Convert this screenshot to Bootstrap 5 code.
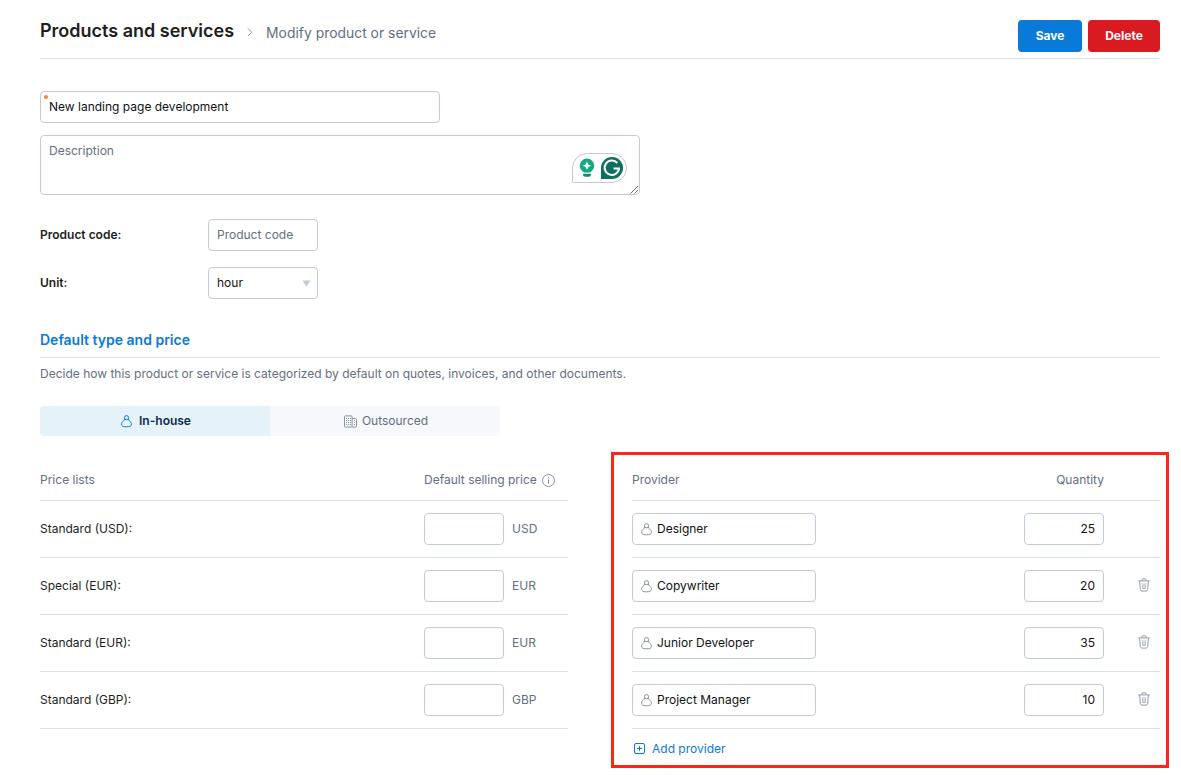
<!DOCTYPE html>
<html lang="en">
<head>
<meta charset="utf-8">
<meta name="viewport" content="width=device-width, initial-scale=1">
<title>Products and services</title>
<link href="https://cdn.jsdelivr.net/npm/bootstrap@5.3.0/dist/css/bootstrap.min.css" rel="stylesheet">
<style>
  body { min-height: 775px; font-family: Inter, "Liberation Sans", sans-serif; font-size: 12px; line-height: 20px; color: #1c1e21; background: #fff; }
  svg { display: block; flex: none; }
  .page { width: 1120px; margin-left: 40px; }
  .line { border-bottom: 1px solid #dae0ea; }
  .soft { color: #646e82; }
  .topbar { height: 59px; padding-top: 20px; margin-bottom: 32px; }
  .topbar h1 { font-size: 18px; line-height: 22px; font-weight: 600; }
  .crumb { font-size: 13.9px; line-height: 22px; padding-top: 2px; }
  .chevron { margin: 7px 13px 0 13px; }
  .btn { height: 32px; border: 0; border-radius: 4px; font-size: 12px; font-weight: 700; padding: 0; color: #fff; }
  .btn-save { width: 64px; background: #0a7ad8; }
  .btn-delete { width: 72px; background: #d91a20; }
  .form-control, .form-select { height: 32px; font-size: 12px; line-height: 20px; color: #101214; border: 1px solid #c3cadb; border-radius: 4px; padding: 5px 8px; background-color: #fff; }
  input.form-control { padding-top: 4px; padding-bottom: 6px; }
  .form-control::placeholder { color: #646e82; }
  .name-field { width: 400px; }
  .dot { left: 4px; top: 4px; width: 4px; height: 4px; background: #f5823a; border-radius: 50%; }
  .desc { width: 600px; height: 60px; margin-top: 12px; }
  .desc textarea { height: 60px; resize: none; }
  .writer { left: 532px; top: 18px; }
  .grip { right: 1px; bottom: 1px; }
  .lbl { width: 168px; font-weight: 600; }
  .w110 { width: 110px; }
  .form-select.w110 { background-image: none; }
  .caret { right: 7px; top: 13px; }
  .section { font-size: 14px; font-weight: 600; color: #0a7ad8; height: 28px; line-height: 20px; margin-top: 31px; }
  .types { width: 460px; height: 30px; margin-top: 22px; border-radius: 4px; overflow: hidden; background: #f6f8fc; }
  .types > div { width: 230px; padding-left: 2px; }
  .types .on { background: #e6f2f9; color: #0d2a4d; font-weight: 600; }
  .blue { color: #0a7ad8; }
  .grey { color: #8790a3; }
  .lists { gap: 64px; margin-top: 34px; }
  .lists > div { width: 528px; }
  .thead-row { height: 31px; }
  .info { margin: 4px 0 0 5px; }
  .item { height: 57px; }
  .c1 { width: 384px; }
  .w80 { width: 80px; }
  .item .prov { width: 184px; padding-left: 24px; }
  .prov-icon { left: 8.500px; top: 10px; }
  .qty-head { margin-right: 56px; }
  .qty { width: 80px; text-align: right; }
  .del { width: 56px; padding: 0 0 2px 34px; }
  .add { color: #0a7ad8; margin-top: 10px; padding-left: 2px; gap: 7px; }
  .add svg { margin-bottom: 1px; }
  .callout { left: -21px; right: -9px; top: -18px; height: 316px; border: 3px solid #fb2518; pointer-events: none; }
</style>
</head>
<body>
<svg width="0" height="0" class="position-absolute" aria-hidden="true">
  <defs>
    <symbol id="person" viewBox="0 0 12 13"><g fill="none" stroke="currentColor" stroke-width="1"><circle cx="5.5" cy="2.7" r="2.1"/><path d="M3.600 3.900C3.300 5 3.300 5.300 2.600 5.800 1.300 6.700.6 7.900.6 9.100c0 2 1.500 2.700 4.900 2.700s4.900-.7 4.900-2.700c0-1.200-.7-2.400-2-3.300C7.700 5.300 7.700 5 7.400 3.900"/></g></symbol>
    <symbol id="trash" viewBox="0 0 12 14"><g fill="none" stroke="currentColor" stroke-width=".9"><path d="M.2 2.900h11.600M4 2.700V1.600q0-.8.8-.8h2.400q.8 0 .8.800v1.100M1.500 3.100l.9 8.500q.2 1.500 1.500 1.500h4.200q1.300 0 1.500-1.500l.9-8.500"/><path d="M4.200 5.200l.5 5.300h2.600l.5-5.300M6 5.200v5.300" stroke-width=".6"/></g></symbol>
  </defs>
</svg>
<main class="page">
  <header class="topbar line d-flex justify-content-between">
    <div class="d-flex">
      <h1 class="mb-0">Products and services</h1>
      <svg class="chevron" width="6" height="10" viewBox="0 0 6 10"><path d="M1 1.500l3.700 3.700L1 8.900" fill="none" stroke="#8992a5"/></svg>
      <span class="crumb soft">Modify product or service</span>
    </div>
    <div class="d-flex" style="gap:6px">
      <button class="btn btn-save">Save</button>
      <button class="btn btn-delete">Delete</button>
    </div>
  </header>

  <div class="name-field position-relative">
    <input class="form-control" value="New landing page development">
    <span class="dot position-absolute"></span>
  </div>
  <div class="desc position-relative">
    <textarea class="form-control" placeholder="Description"></textarea>
    <svg class="writer position-absolute" width="56" height="31" viewBox="0 0 56 31">
      <path d="M.5 29.500V15A14.500 14.500 0 0 1 15 .5h25a14.500 14.500 0 0 1 0 29z" fill="#fff" stroke="#c3c8da"/>
      <path d="M15 5.500a7.300 7.300 0 0 1 7.300 7.300c0 3-1.800 4.400-3.300 5.900q-.7.800-1.500.800h-5q-.8 0-1.500-.8c-1.500-1.500-3.300-2.900-3.300-5.900A7.300 7.300 0 0 1 15 5.500z" fill="#15a884"/>
      <path d="M15 8.500l1.300 2.900 2.900 1.300-2.900 1.300L15 16.900 13.700 14l-2.900-1.300 2.900-1.300z" fill="#fff"/>
      <path d="M11 20.800h8v.7q0 2.300-2.300 2.300h-3.400q-2.300 0-2.300-2.300z" fill="#0d8f74"/>
      <path d="M29 26V15a11 11 0 1 1 11 11z" fill="#0d705e"/>
      <path d="M45.300 10A7.200 7.200 0 1 0 47 15.500h-5.500" fill="none" stroke="#fff" stroke-width="2"/>
    </svg>
    <svg class="grip position-absolute" width="9" height="9" viewBox="0 0 9 9"><path d="M.5 8.500l7.500-7.500M4.500 8.500l3.500-3.500" stroke="#666" stroke-width="1"/></svg>
  </div>

  <div class="d-flex align-items-center mt-4">
    <label class="lbl" for="code">Product code:</label>
    <input id="code" class="form-control w110" placeholder="Product code">
  </div>
  <div class="d-flex align-items-center mt-3">
    <span class="lbl">Unit:</span>
    <div class="position-relative w110">
      <div class="form-select w110">hour</div>
      <svg class="caret position-absolute" width="9" height="7" viewBox="0 0 9 7"><path d="M1 .5h7q.6 0 .2.600L5.100 5.700q-.6.800-1.200 0L.8 1.100Q.4.500 1 .5z" fill="#c3cadb"/></svg>
    </div>
  </div>

  <h2 class="section line mb-0">Default type and price</h2>
  <p class="soft mb-0" style="margin-top:6px">Decide how this product or service is categorized by default on quotes, invoices, and other documents.</p>
  <div class="types d-flex">
    <div class="on d-flex align-items-center justify-content-center" style="gap:6px"><svg class="blue" width="12" height="13"><use href="#person"/></svg>In-house</div>
    <div class="soft d-flex align-items-center justify-content-center" style="gap:5px">
      <svg width="13" height="13" viewBox="0 0 13 13"><g fill="none" stroke="#7d879b" stroke-width=".9"><rect x=".5" y=".9" width="7.600" height="11.200" rx="1"/><path d="M8.100 3.500h3.400q1 0 1 1v6.600q0 1-1 1H8.100"/><path d="M2 3.500h5M2 5.500h5M2 7.500h5M2 9.500h5" stroke-dasharray="1 1"/><path d="M10 5.500h1M10 7.500h1M10 9.500h1"/></g></svg>Outsourced</div>
  </div>

  <div class="lists d-flex">
    <div>
      <div class="thead-row line soft d-flex"><span class="c1">Price lists</span><span>Default selling price</span>
        <svg class="info" width="13" height="13" viewBox="0 0 13 13"><circle cx="6.500" cy="6.500" r="6" fill="none" stroke="#7d879b" stroke-width=".9"/><path d="M6.500 5.400v4.300M6.500 3v1.200" stroke="#7d879b"/></svg></div>
      <div class="item line d-flex align-items-center"><span class="c1">Standard (USD):</span><input class="form-control w80 me-2"><span class="soft">USD</span></div>
      <div class="item line d-flex align-items-center"><span class="c1">Special (EUR):</span><input class="form-control w80 me-2"><span class="soft">EUR</span></div>
      <div class="item line d-flex align-items-center"><span class="c1">Standard (EUR):</span><input class="form-control w80 me-2"><span class="soft">EUR</span></div>
      <div class="item line d-flex align-items-center"><span class="c1">Standard (GBP):</span><input class="form-control w80 me-2"><span class="soft">GBP</span></div>
    </div>
    <div class="position-relative">
      <div class="thead-row line soft d-flex justify-content-between"><span>Provider</span><span class="qty-head">Quantity</span></div>
      <div class="item line d-flex align-items-center"><div class="position-relative me-auto"><input class="form-control prov" value="Designer"><svg class="prov-icon grey position-absolute" width="12" height="13"><use href="#person"/></svg></div><input class="form-control qty" value="25"><span class="del"></span></div>
      <div class="item line d-flex align-items-center"><div class="position-relative me-auto"><input class="form-control prov" value="Copywriter"><svg class="prov-icon grey position-absolute" width="12" height="13"><use href="#person"/></svg></div><input class="form-control qty" value="20"><span class="del grey"><svg width="12" height="14"><use href="#trash"/></svg></span></div>
      <div class="item line d-flex align-items-center"><div class="position-relative me-auto"><input class="form-control prov" value="Junior Developer"><svg class="prov-icon grey position-absolute" width="12" height="13"><use href="#person"/></svg></div><input class="form-control qty" value="35"><span class="del grey"><svg width="12" height="14"><use href="#trash"/></svg></span></div>
      <div class="item line d-flex align-items-center"><div class="position-relative me-auto"><input class="form-control prov" value="Project Manager"><svg class="prov-icon grey position-absolute" width="12" height="13"><use href="#person"/></svg></div><input class="form-control qty" value="10"><span class="del grey"><svg width="12" height="14"><use href="#trash"/></svg></span></div>
      <div class="add d-flex align-items-center"><svg width="11" height="11" viewBox="0 0 11 11"><rect x=".5" y=".5" width="10" height="10" rx="1.500" fill="none" stroke="currentColor"/><path d="M3 5.500h5M5.500 3v5" stroke="currentColor"/></svg>Add provider</div>
      <div class="callout position-absolute"></div>
    </div>
  </div>
</main>
<script src="https://cdn.jsdelivr.net/npm/bootstrap@5.3.0/dist/js/bootstrap.bundle.min.js"></script>
</body>
</html>
